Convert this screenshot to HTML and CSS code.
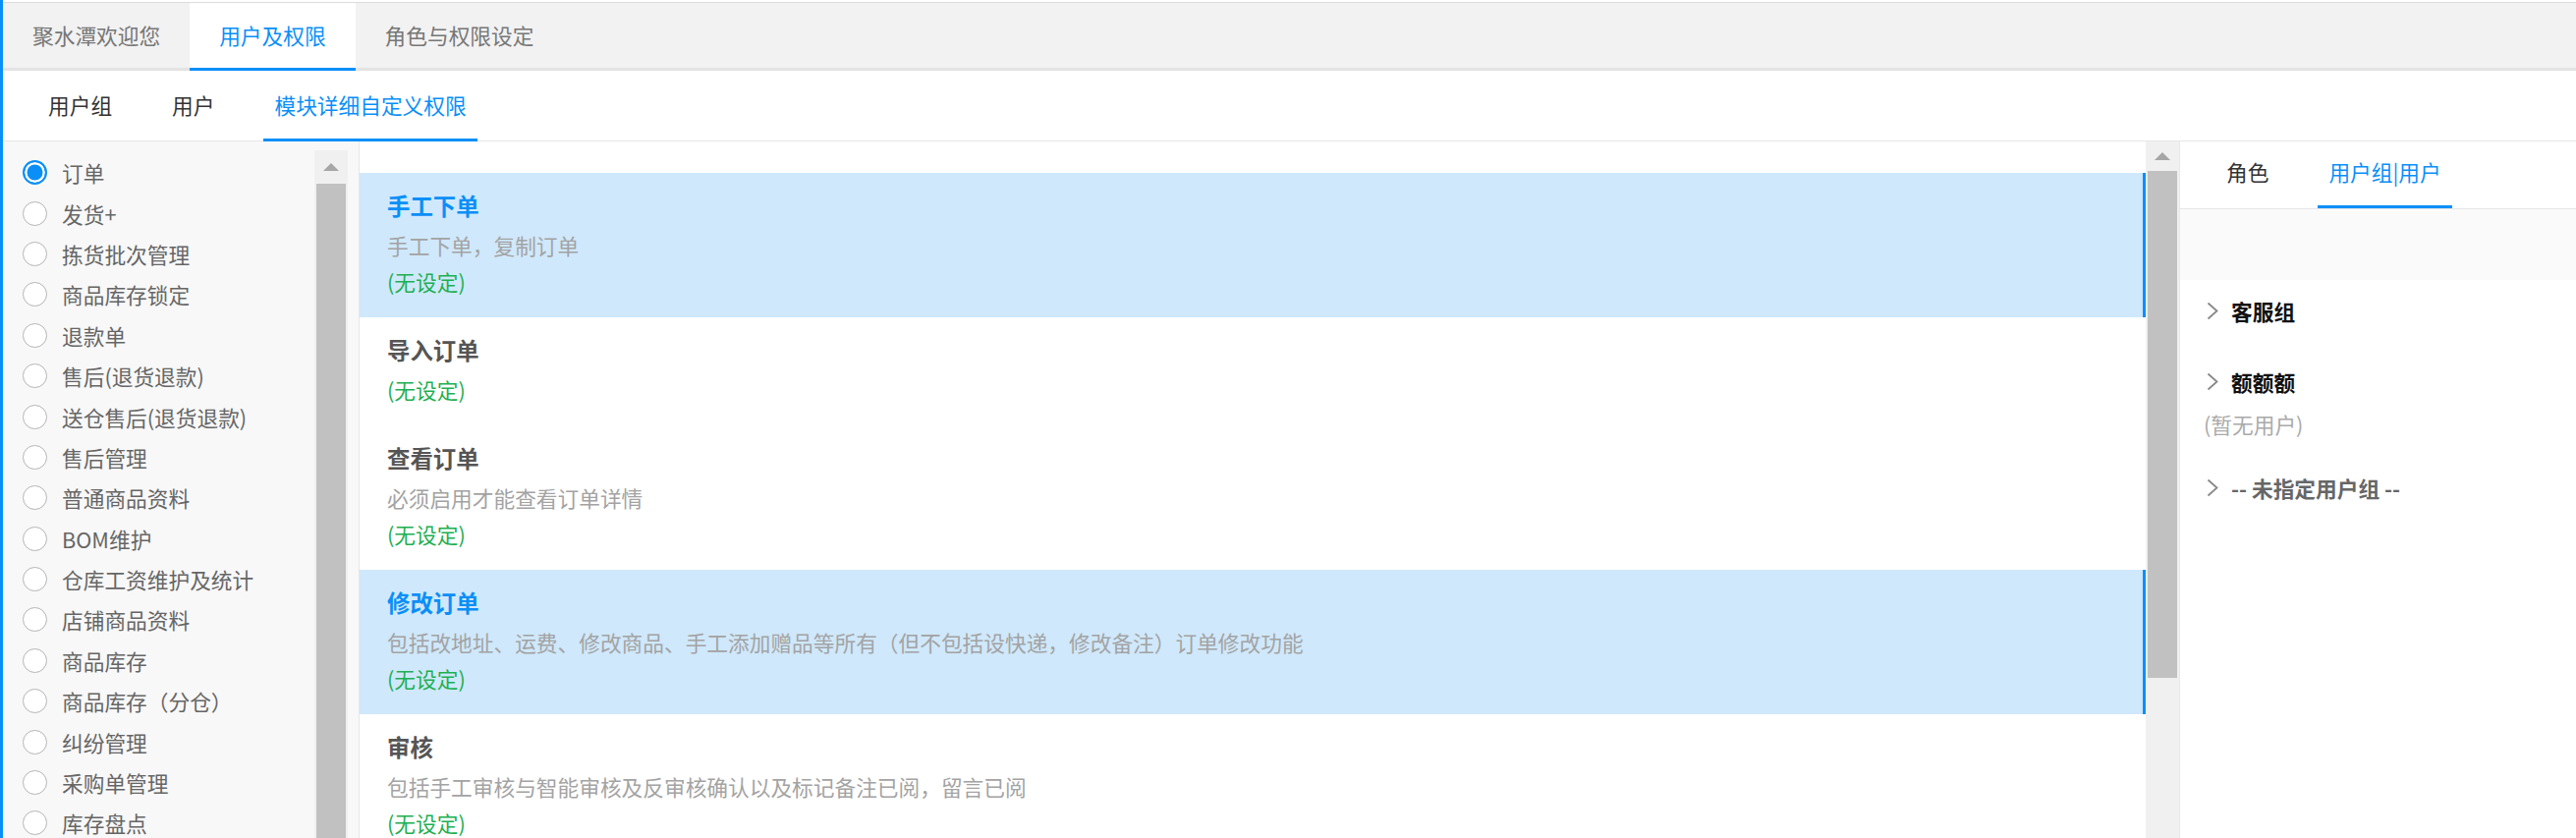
FILE: index.html
```html
<!DOCTYPE html>
<html lang="zh-CN">
<head>
    <meta charset="UTF-8">
    <meta name="viewport" content="width=device-width, initial-scale=1.0">
    <title>用户及权限</title>
    <link rel="stylesheet" href="styles.css">
</head>
<body>
<div class="page">
    <div class="topbar">
        <div class="toptab">聚水潭欢迎您</div>
        <div class="toptab active">用户及权限</div>
        <div class="toptab">角色与权限设定</div>
    </div>

    <div class="subtabs">
        <div class="subtab">用户组</div>
        <div class="subtab">用户</div>
        <div class="subtab active">模块详细自定义权限</div>
    </div>

    <div class="main">
        <!-- modules -->
        <div class="modules">
            <ul class="module-list">
                <li class="module"><span class="radio checked"></span>订单</li>
                <li class="module"><span class="radio"></span>发货+</li>
                <li class="module"><span class="radio"></span>拣货批次管理</li>
                <li class="module"><span class="radio"></span>商品库存锁定</li>
                <li class="module"><span class="radio"></span>退款单</li>
                <li class="module"><span class="radio"></span>售后(退货退款)</li>
                <li class="module"><span class="radio"></span>送仓售后(退货退款)</li>
                <li class="module"><span class="radio"></span>售后管理</li>
                <li class="module"><span class="radio"></span>普通商品资料</li>
                <li class="module"><span class="radio"></span>BOM维护</li>
                <li class="module"><span class="radio"></span>仓库工资维护及统计</li>
                <li class="module"><span class="radio"></span>店铺商品资料</li>
                <li class="module"><span class="radio"></span>商品库存</li>
                <li class="module"><span class="radio"></span>商品库存（分仓）</li>
                <li class="module"><span class="radio"></span>纠纷管理</li>
                <li class="module"><span class="radio"></span>采购单管理</li>
                <li class="module"><span class="radio"></span>库存盘点</li>
            </ul>
            <div class="scrollbar">
                <div class="scroll-up"></div>
                <div class="thumb"></div>
            </div>
        </div>

        <!-- permissions -->
        <div class="perms">
            <div class="perm-list">
                <div class="perm active">
                    <div class="perm-title">手工下单</div>
                    <div class="perm-desc">手工下单，复制订单</div>
                    <div class="perm-state">(无设定)</div>
                </div>
                <div class="perm">
                    <div class="perm-title">导入订单</div>
                    <div class="perm-state">(无设定)</div>
                </div>
                <div class="perm">
                    <div class="perm-title">查看订单</div>
                    <div class="perm-desc">必须启用才能查看订单详情</div>
                    <div class="perm-state">(无设定)</div>
                </div>
                <div class="perm active">
                    <div class="perm-title">修改订单</div>
                    <div class="perm-desc">包括改地址、运费、修改商品、手工添加赠品等所有（但不包括设快递，修改备注）订单修改功能</div>
                    <div class="perm-state">(无设定)</div>
                </div>
                <div class="perm">
                    <div class="perm-title">审核</div>
                    <div class="perm-desc">包括手工审核与智能审核及反审核确认以及标记备注已阅，留言已阅</div>
                    <div class="perm-state">(无设定)</div>
                </div>
            </div>
            <div class="scrollbar">
                <div class="scroll-up"></div>
                <div class="thumb"></div>
            </div>
        </div>

        <!-- roles / users -->
        <div class="owners">
            <div class="owner-tabs">
                <div class="owner-tab">角色</div>
                <div class="owner-tab active">用户组|用户</div>
            </div>
            <div class="owner-filter"></div>
            <div class="tree">
                <div class="group">
                    <div class="group-head">
                        <svg class="chevron" width="12" height="19" viewBox="0 0 12 19"><polyline points="1.5,1.5 10.5,9.5 1.5,17.5" fill="none" stroke="#888" stroke-width="1.8"/></svg>
                        客服组
                    </div>
                </div>
                <div class="group">
                    <div class="group-head">
                        <svg class="chevron" width="12" height="19" viewBox="0 0 12 19"><polyline points="1.5,1.5 10.5,9.5 1.5,17.5" fill="none" stroke="#888" stroke-width="1.8"/></svg>
                        额额额
                    </div>
                    <div class="group-empty">(暂无用户)</div>
                </div>
                <div class="group unassigned">
                    <div class="group-head">
                        <svg class="chevron" width="12" height="19" viewBox="0 0 12 19"><polyline points="1.5,1.5 10.5,9.5 1.5,17.5" fill="none" stroke="#888" stroke-width="1.8"/></svg>
                        -- 未指定用户组 --
                    </div>
                </div>
            </div>
        </div>
    </div>
</div>
</body>
</html>
```

FILE: styles.css
```css
* {
    box-sizing: border-box;
}

html, body {
    margin: 0;
    height: 100%;
}

body {
    font-family: "Noto Sans CJK SC", "Noto Sans", sans-serif;
    font-size: 21.7px;
    background: #fff;
    overflow: hidden;
}

.page {
    height: 100vh;
    padding-top: 2px;
    border-left: 3px solid #0a8ff7;
    display: flex;
    flex-direction: column;
}

/* top tabs */
.topbar {
    height: 70px;
    flex-shrink: 0;
    display: flex;
    align-items: flex-start;
    background: #f2f2f2;
    border-top: 1px solid #dcdcdc;
    border-bottom: 3px solid #e3e3e3;
}
.toptab {
    height: 69px;
    line-height: 66px;
    padding: 0 30px;
    color: #777;
    border-bottom: 3px solid transparent;
}
.toptab.active {
    background: #fff;
    color: #0a8ff7;
    border-bottom-color: #0a8ff7;
}

/* second row */
.subtabs {
    height: 72px;
    flex-shrink: 0;
    display: flex;
    align-items: flex-start;
    gap: 39px;
    padding-left: 35px;
    border-bottom: 1px solid #e6e6e6;
}
.subtab {
    height: 72px;
    line-height: 69px;
    padding: 0 11px;
    color: #333;
    border-bottom: 3px solid transparent;
}
.subtab.active {
    color: #0a8ff7;
    border-bottom-color: #0a8ff7;
}

.main {
    flex: 1;
    min-height: 0;
    display: flex;
    overflow: hidden;
}

/* fake scrollbars */
.scrollbar {
    width: 34px;
    flex-shrink: 0;
    background: #f0f0f0;
    display: flex;
    flex-direction: column;
    align-items: center;
}
.scroll-up {
    width: 100%;
    height: 34px;
    display: flex;
    align-items: center;
    justify-content: center;
}
.scroll-up::before {
    content: "";
    border-left: 8px solid transparent;
    border-right: 8px solid transparent;
    border-bottom: 8px solid #a6a6a6;
}
.thumb {
    width: 30px;
    background: #c1c1c1;
}

/* left module list */
.modules {
    width: 363px;
    flex-shrink: 0;
    display: flex;
    background: #f8f8f8;
    border-right: 1px solid #e6e6e6;
}
.module-list {
    flex: 1;
    list-style: none;
    margin: 0;
    padding: 11px 0 0 20px;
}
.module {
    height: 41.4px;
    display: flex;
    align-items: center;
    color: #666;
    white-space: nowrap;
}
.radio {
    width: 25px;
    height: 25px;
    flex-shrink: 0;
    margin-right: 15px;
    border: 1px solid #b5b5b5;
    border-radius: 50%;
    background: #fff;
}
.radio.checked {
    border: 2.5px solid #0a8ff7;
    background: #0a8ff7;
    box-shadow: inset 0 0 0 2.5px #fff;
}
.modules .scrollbar {
    margin: 9px 11px 0 0;
}
.modules .thumb {
    flex: 1;
}

/* middle permission cards */
.perms {
    flex: 1;
    min-width: 0;
    display: flex;
}
.perm-list {
    flex: 1;
    padding-top: 32px;
}
.perm {
    padding: 15px 28px 18px;
    white-space: nowrap;
}
.perm.active {
    background: #cfe8fc;
    border-right: 3px solid #0a8ff7;
}
.perm-title {
    font-size: 23.4px;
    font-weight: bold;
    line-height: 36px;
    margin-bottom: 4px;
    color: #555;
}
.perm.active .perm-title {
    color: #0a8ff7;
}
.perm-desc {
    line-height: 37px;
    color: #a3a3a3;
}
.perm-state {
    line-height: 37px;
    color: #1db052;
}
.perms .scroll-up {
    height: 30px;
}
.perms .thumb {
    height: 516px;
}

/* right panel */
.owners {
    width: 404px;
    flex-shrink: 0;
    border-left: 1px solid #e8e8e8;
}
.owner-tabs {
    height: 69px;
    display: flex;
    align-items: flex-start;
    gap: 39px;
    padding-left: 36px;
    border-bottom: 1px solid #e5e5e5;
}
.owner-tab {
    height: 68px;
    line-height: 62px;
    padding: 0 11px;
    color: #333;
    border-bottom: 3px solid transparent;
}
.owner-tab.active {
    color: #0a8ff7;
    border-bottom-color: #0a8ff7;
}
.owner-filter {
    height: 72px;
    background: #fafafa;
}
.tree {
    padding: 13px 0 0 24px;
}
.group {
    padding-bottom: 28px;
}
.group-head {
    height: 36px;
    margin-bottom: 8px;
    padding-left: 3px;
    display: flex;
    align-items: center;
    font-weight: bold;
    color: #111;
}
.chevron {
    margin-right: 13px;
}
.group.unassigned .group-head {
    color: #666;
}
.group-empty {
    line-height: 36px;
    color: #aaa;
}
```
